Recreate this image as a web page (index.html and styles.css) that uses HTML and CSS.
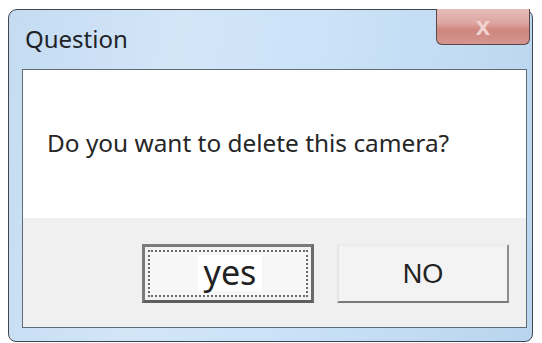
FILE: index.html
```html
<!DOCTYPE html>
<html>
<head>
<meta charset="utf-8">
<link rel="stylesheet" href="styles.css">
</head>
<body>
<div class="window">
  <div class="titlebar">
    <span class="title">Question</span>
    <div class="close"><span class="close-x">x</span></div>
  </div>
  <div class="panel">
    <div class="message"><p class="msg-text">Do you want to delete this camera?</p></div>
    <div class="footer">
      <button class="btn btn-default"><span class="focus"><span class="label-yes">yes</span></span></button>
      <button class="btn btn-no">NO</button>
    </div>
  </div>
</div>
</body>
</html>
```

FILE: styles.css
```css
html, body {
  margin: 0;
  padding: 0;
  background: #ffffff;
  width: 542px;
  height: 343px;
  overflow: hidden;
}
.window {
  box-sizing: border-box;
  margin: 9px 0 0 8px;
  width: 525px;
  height: 333px;
  border: 1px solid #3f4650;
  border-radius: 9px 9px 8px 8px;
  background: linear-gradient(100deg, #c4dbf1 0%, #d3e6f8 30%, #cbe2f7 55%, #c2dbf3 80%, #b9d4ee 100%);
  display: flex;
  flex-direction: column;
  padding: 0 5px 13px 13px;
}
.titlebar {
  height: 59px;
  display: flex;
  justify-content: space-between;
  align-items: flex-start;
  margin-right: -3px;
}
.title {
  font-family: "Noto Sans", "Open Sans", sans-serif;
  font-size: 24px;
  color: #1f2328;
  padding: 13px 0 0 3px;
  line-height: 32px;
}
.close {
  margin-top: -1px;
  width: 94px;
  height: 36px;
  box-sizing: border-box;
  border: 1px solid #5b4746;
  border-top: none;
  border-radius: 0 0 6px 6px;
  background: linear-gradient(180deg, #e6bdb9 0%, #dda6a1 40%, #cf8680 60%, #d49590 100%);
  display: flex;
  align-items: center;
  justify-content: center;
}
.close-x {
  font-family: "Liberation Sans", sans-serif;
  font-weight: bold;
  font-size: 26px;
  line-height: 26px;
  color: #f0d3cf;
  margin-top: -2px;
}
.panel {
  flex: 1;
  border: 1px solid #5f6b77;
  display: flex;
  flex-direction: column;
}
.message {
  height: 148px;
  background: #ffffff;
}
.msg-text {
  margin: 0;
  padding: 57px 0 0 24px;
  font-family: "Noto Sans", "Open Sans", sans-serif;
  font-size: 24.4px;
  line-height: 32px;
  color: #262626;
}
.footer {
  flex: 1;
  background: #f0f0f0;
  display: flex;
  justify-content: flex-end;
  align-items: flex-start;
  gap: 23px;
  padding: 26px 17px 0 0;
}
.btn {
  box-sizing: border-box;
  width: 172px;
  height: 59px;
  margin: 0;
  padding: 0;
  font-family: "Liberation Sans", Arial, sans-serif;
  color: #222;
  cursor: default;
}
.btn-default {
  border: 3px solid #6c6c6c;
  border-color: #7a7a7a #6a6a6a #5e5e5e #7a7a7a;
  background: #f2f2f2;
  padding: 3px;
}
.focus {
  display: flex;
  align-items: center;
  justify-content: center;
  height: 100%;
  box-sizing: border-box;
  border: 2px dotted #6a6a6a;
  background: #f7f7f7;
}
.label-yes {
  font-family: "Noto Sans", "Open Sans", sans-serif;
  font-size: 34px;
  line-height: 34px;
  background: #ffffff;
  padding: 0 6px 2px 6px;
  margin-left: 4px;
  margin-top: -2px;
  color: #222;
}
.btn-no {
  border: 2px solid;
  border-color: #ececec #8c8c8c #7a7a7a #e6e6e6;
  background: #f3f3f3;
  font-size: 27px;
  padding-top: 2px;
}
```
